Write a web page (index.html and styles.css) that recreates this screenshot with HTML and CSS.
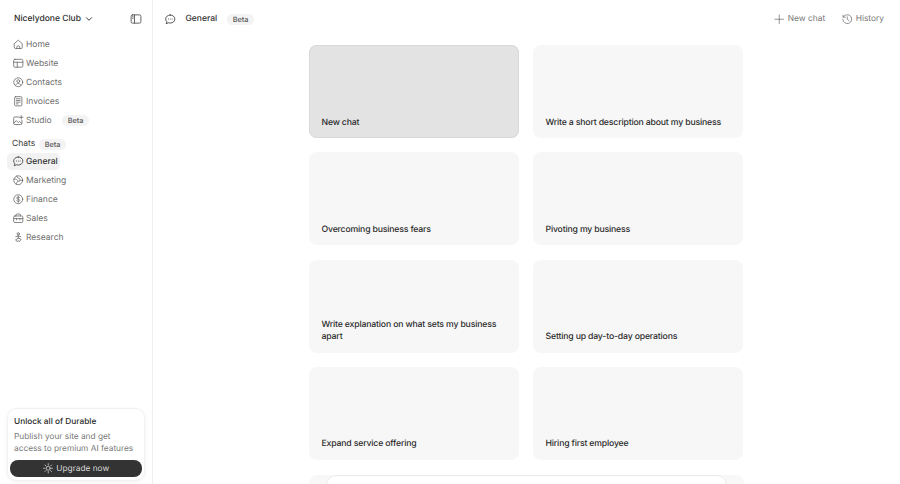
FILE: index.html
```html
<!DOCTYPE html>
<html lang="en">
<head>
    <meta charset="UTF-8">
    <meta name="viewport" content="width=device-width, initial-scale=1.0">
    <title>General - Chats</title>
    <link rel="stylesheet" href="styles.css">
</head>
<body>
    <div class="app">
        <aside class="sidebar">
            <div class="side-top">
                <div class="club">
                    Nicelydone Club
                    <svg class="chev" viewBox="0 0 12 12"><path d="M2 4l4 4 4-4"/></svg>
                </div>
                <svg class="icon panel-icon" viewBox="0 0 16 16"><rect x="1.500" y="2.500" width="13" height="11" rx="2"/><path d="M6 2.500v11M3.400 5h.8M3.400 7h.8"/></svg>
            </div>

            <nav class="menu">
                <a class="item"><svg class="icon" viewBox="0 0 16 16"><path d="M2 7 8 1.800 14 7v6a1.500 1.500 0 0 1-1.500 1.500h-9A1.500 1.500 0 0 1 2 13z"/><path d="M5.800 14.500v-2a2.200 2.200 0 0 1 4.400 0v2"/></svg>Home</a>
                <a class="item"><svg class="icon" viewBox="0 0 16 16"><rect x="1" y="2" width="14" height="12" rx="2"/><path d="M1 6.500h14M6.500 6.500V14"/></svg>Website</a>
                <a class="item"><svg class="icon" viewBox="0 0 16 16"><circle cx="8" cy="8" r="6.800"/><circle cx="8" cy="6.300" r="2.200"/><path d="M4.300 12.300c.7-1.600 2.100-2.400 3.700-2.400s3 .8 3.700 2.400"/></svg>Contacts</a>
                <a class="item"><svg class="icon" viewBox="0 0 16 16"><rect x="2.500" y="1" width="11" height="14" rx="1.500"/><path d="M5.200 4.200h5.600M5.200 6.800h5.600M5.200 9.400h5.600M5.200 12h2.500"/></svg>Invoices</a>
                <a class="item"><svg class="icon" viewBox="0 0 16 16"><path d="M8.500 3H2.800A1.800 1.800 0 0 0 1 4.800v8A1.800 1.800 0 0 0 2.800 14.500h9a1.800 1.800 0 0 0 1.800-1.800V8"/><path d="m1.300 12.300 3.700-3.800 3 3 1.800-1.700 3.600 3.200"/><path d="M12.500 .8v5.400M9.800 3.500h5.400"/></svg>Studio<span class="badge">Beta</span></a>
            </nav>

            <div class="chats-head">Chats<span class="badge">Beta</span></div>

            <nav class="menu">
                <a class="item active"><svg class="icon" viewBox="0 0 16 16"><path d="M8 1.500c3.800 0 7 2.700 7 6.200s-3.200 6.100-7 6.100c-.9 0-1.700-.1-2.500-.4L1.800 14.800l1-3.100C1.700 10.600 1 9.200 1 7.700 1 4.200 4.200 1.500 8 1.500z"/><path d="M5.200 7.700h.1M8 7.700h.1M10.800 7.700h.1"/></svg>General</a>
                <a class="item"><svg class="icon" viewBox="0 0 16 16"><circle cx="8" cy="8" r="6.800"/><path d="M1.500 6.300c2.200-.5 3.800 0 5 1.700s2.500 2 3.500 1 2.800-1.200 4.700-.6M5.800 1.600C6.300 4 7 4.500 9 5s2 2 1 3M5 14c.3-2.200 1-3.500 2.500-4.700"/></svg>Marketing</a>
                <a class="item"><svg class="icon" viewBox="0 0 16 16"><circle cx="8" cy="8" r="6.800"/><path d="M10.200 5.800C9.800 5 9 4.600 8 4.600c-1.300 0-2.300.6-2.300 1.700 0 2.300 4.600 1.100 4.600 3.400 0 1.100-1 1.700-2.300 1.700-1 0-1.900-.4-2.300-1.300M8 3.300v9.400"/></svg>Finance</a>
                <a class="item"><svg class="icon" viewBox="0 0 16 16"><rect x="1" y="4.500" width="14" height="10" rx="2"/><path d="M4.500 4.500V3.200A1.800 1.800 0 0 1 6.300 1.500h3.400a1.800 1.800 0 0 1 1.800 1.700v1.300M1 8.500h14M5.500 8.500v2M10.500 8.500v2"/></svg>Sales</a>
                <a class="item"><svg class="icon" viewBox="0 0 16 16"><circle cx="8" cy="2.800" r="1.800"/><path d="M8 4.600v5M4.200 7.200 8 6l3.800 1.200M8 9.600l-4 2.200 2.400 3L8 13l1.600 1.800 2.400-3z"/></svg>Research</a>
            </nav>

            <div class="promo">
                <div class="promo-title">Unlock all of Durable</div>
                <p class="promo-text">Publish your site and get<br>access to premium AI features</p>
                <button class="upgrade"><svg class="icon" viewBox="0 0 16 16"><circle cx="8" cy="8" r="3"/><path d="M8 1v2M8 13v2M1 8h2M13 8h2M3 3l1.500 1.500M11.500 11.500 13 13M13 3l-1.500 1.500M4.500 11.500 3 13"/></svg>Upgrade now</button>
            </div>
        </aside>

        <main class="main">
            <header class="topbar">
                <div class="title">
                    <svg class="icon title-icon" viewBox="0 0 16 16"><path d="M8 1.500c3.800 0 7 2.700 7 6.200s-3.200 6.100-7 6.100c-.9 0-1.700-.1-2.500-.4L1.800 14.800l1-3.100C1.700 10.600 1 9.200 1 7.700 1 4.200 4.200 1.500 8 1.500z"/><path d="M5.200 7.700h.1M8 7.700h.1M10.800 7.700h.1"/></svg>
                    <span class="title-text">General</span>
                    <span class="badge">Beta</span>
                </div>
                <div class="actions">
                    <a class="action"><svg class="icon" viewBox="0 0 16 16"><path d="M8 1.500v13M1.500 8h13"/></svg>New chat</a>
                    <a class="action"><svg class="icon" viewBox="0 0 16 16"><path d="M2 4.600A6.800 6.800 0 1 1 1.200 8"/><path d="M1.600 1.600v3.300h3.300M8 4.300V8l2.600 2.200"/></svg>History</a>
                </div>
            </header>

            <div class="content">
                <div class="grid">
                    <div class="card selected">New chat</div>
                    <div class="card">Write a short description about my business</div>
                    <div class="card">Overcoming business fears</div>
                    <div class="card">Pivoting my business</div>
                    <div class="card">Write explanation on what sets my business apart</div>
                    <div class="card">Setting up day-to-day operations</div>
                    <div class="card">Expand service offering</div>
                    <div class="card">Hiring first employee</div>
                </div>
                <div class="composer-wrap">
                    <div class="composer"></div>
                </div>
            </div>
        </main>
    </div>
</body>
</html>
```

FILE: styles.css
```css
html, body {
    margin: 0;
    height: 100%;
    overflow: hidden;
    background: #fff;
}
body {
    font-family: Inter, "Liberation Sans", sans-serif;
    font-size: 8.500px;
    color: #2b2b2b;
    text-rendering: geometricPrecision;
}
.app {
    display: flex;
    height: 484px;
    overflow: hidden;
}
.icon {
    width: 10.500px;
    height: 10.500px;
    flex: none;
    fill: none;
    stroke: currentColor;
    stroke-width: 1.200;
    stroke-linecap: round;
    stroke-linejoin: round;
}

/* sidebar */
.sidebar {
    width: 153px;
    flex: none;
    box-sizing: border-box;
    border-right: 1px solid #efefef;
    padding: 0 9px 0 7px;
    display: flex;
    flex-direction: column;
    position: relative;
}
.side-top {
    height: 36px;
    display: flex;
    align-items: center;
    justify-content: space-between;
    padding: 1px 1px 0 7px;
    box-sizing: border-box;
}
.club {
    display: flex;
    align-items: center;
    gap: 4px;
    color: #2e2e2e;
    font-weight: 500;
}
.chev {
    width: 8px;
    height: 8px;
    fill: none;
    stroke: #333;
    stroke-width: 1.400;
    stroke-linecap: round;
    stroke-linejoin: round;
}
.panel-icon {
    color: #555;
    width: 12px;
    height: 12px;
}
.menu {
    display: flex;
    flex-direction: column;
    gap: 2px;
    align-items: flex-start;
}
.item {
    height: 17px;
    display: flex;
    align-items: center;
    gap: 2.500px;
    padding: 0 2px 0 6px;
    border-radius: 5px;
    color: #6e6e6e;
}
.item .icon {
    color: #666;
}
.item.active {
    background: #f2f2f2;
    color: #333;
    font-weight: 500;
}
.item.active .icon {
    color: #333;
}
.badge {
    display: inline-block;
    background: #f3f3f3;
    border-radius: 6px;
    color: #555;
    font-size: 7.300px;
    font-weight: 500;
    line-height: 11px;
    padding: 0 5.500px;
}
.item .badge {
    margin-left: 8px;
}
.chats-head {
    margin: 8px 0 2px 5px;
    height: 14px;
    display: flex;
    align-items: center;
    gap: 4px;
    color: #3a3a3a;
}
.promo {
    position: absolute;
    left: 7px;
    right: 7px;
    bottom: 3px;
    box-sizing: border-box;
    height: 73px;
    padding: 7px 2px 2px;
    border-radius: 10px;
    border: 1px solid #f2f2f2;
    box-shadow: 0 1px 4px rgba(0,0,0,0.06);
    background: #fff;
}
.promo-title {
    color: #2b2b2b;
    font-weight: 500;
    font-size: 8.300px;
    margin: 0 0 3px 4px;
    line-height: 12px;
}
.promo-text {
    margin: 0 0 5px 4px;
    color: #777;
    font-size: 8.300px;
    line-height: 12px;
}
.upgrade {
    width: 100%;
    height: 17px;
    border: none;
    border-radius: 8px;
    background: #333;
    color: #ddd;
    font-family: inherit;
    font-size: 8.300px;
    text-rendering: inherit;
    display: flex;
    align-items: center;
    justify-content: center;
    gap: 3px;
    padding: 0;
}

/* main */
.main {
    flex: 1;
    min-width: 0;
    display: flex;
    flex-direction: column;
}
.topbar {
    height: 36px;
    flex: none;
    box-sizing: border-box;
    display: flex;
    align-items: center;
    justify-content: space-between;
    padding: 2px 16px 0 12px;
}
.title {
    display: flex;
    align-items: center;
}
.title-text {
    margin: 0 10px;
    color: #333;
    font-weight: 500;
}
.actions {
    display: flex;
    gap: 17px;
}
.action {
    display: flex;
    align-items: center;
    gap: 3px;
    color: #777;
    font-size: 8.400px;
}
.content {
    padding: 9px 156px 0;
}
.grid {
    display: grid;
    grid-template-columns: 210px 210px;
    grid-auto-rows: 93px;
    column-gap: 14px;
    row-gap: 14.300px;
}
.card {
    background: #f7f7f7;
    border-radius: 8px;
    padding: 0 12.500px 9.500px;
    display: flex;
    align-items: flex-end;
    box-sizing: border-box;
    color: #2b2b2b;
    font-size: 8.700px;
    letter-spacing: -0.17px;
    font-weight: 500;
    line-height: 12px;
}
.card.selected {
    background: #e3e3e3;
    box-shadow: inset 0 0 0 1px #d9d9d9;
}
.composer-wrap {
    margin-top: 15px;
    height: 40px;
    background: #f8f8f8;
    border-radius: 8px;
    padding: 0 17px;
}
.composer {
    height: 100%;
    background: #fff;
    border: 1px solid #eaeaea;
    border-radius: 10px;
    box-sizing: border-box;
}
```
